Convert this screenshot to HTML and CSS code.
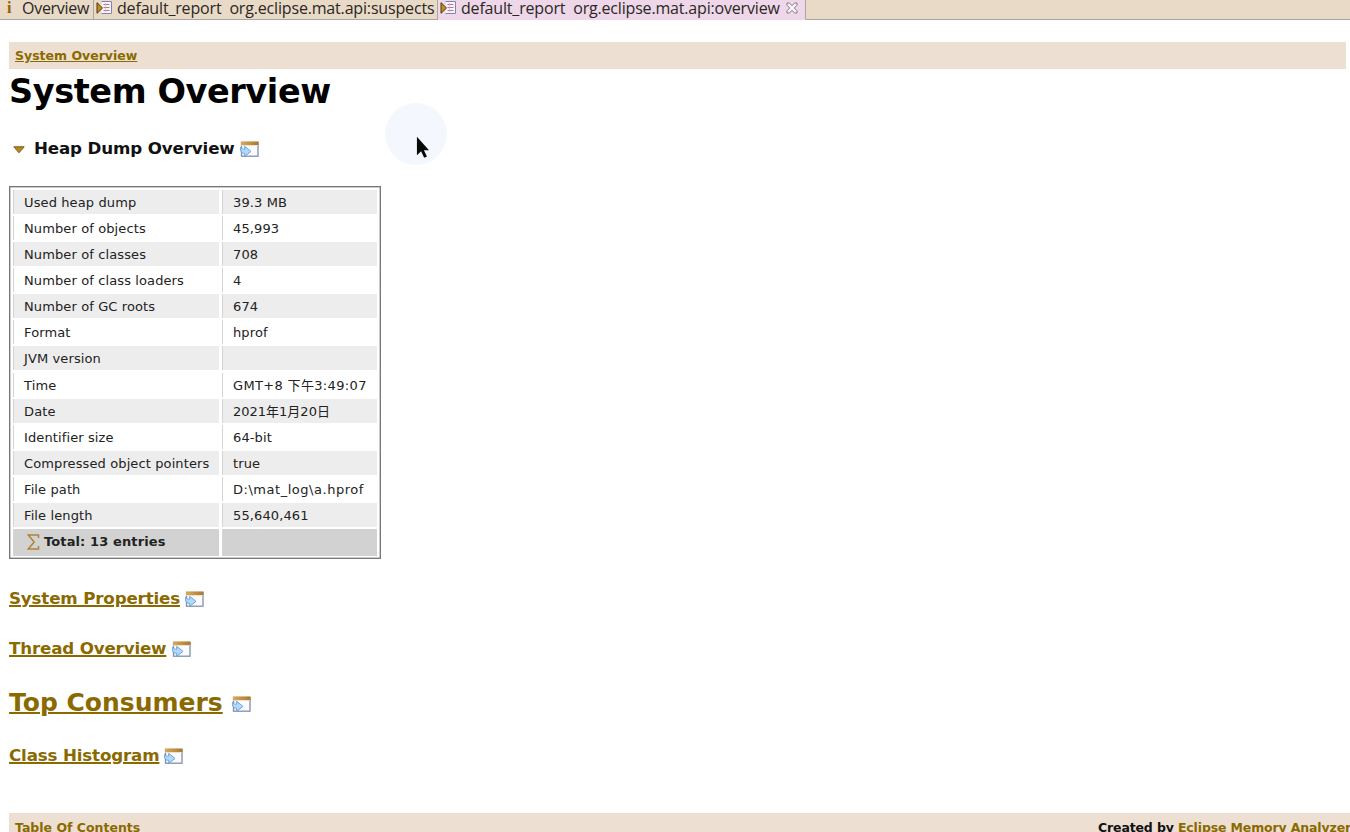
FILE: index.html
```html
<!DOCTYPE html>
<html lang="en">
<head>
<meta charset="utf-8">
<title>System Overview</title>
<link rel="stylesheet" href="styles.css">
</head>
<body>
<svg class="defs" width="0" height="0">
  <defs>
    <linearGradient id="gold" x1="0" x2="1" y1="0" y2="0"><stop offset="0" stop-color="#d9a95c"/><stop offset="1" stop-color="#a87a2b"/></linearGradient>
    <symbol id="open" viewBox="0 0 19 16">
      <rect x="1.5" y="1.5" width="16.5" height="13.7" fill="#fbfbff" stroke="#8190aa" stroke-width="1.3"/>
      <rect x="1" y=".5" width="17.500" height="3.700" fill="url(#gold)"/>
      <path d="M1 4.500h17" stroke="#f0dfbe" stroke-width=".7"/>
      <path d="M.7 6.200c.7 1.800 2 2.200 4 1.900V5.300l6.300 5.100-6.300 4.900v-2.900C2 12.600-.3 10.200.7 6.200z" fill="#b4d8fc" stroke="#6aa3dc" stroke-width="1"/>
    </symbol>
    <symbol id="report" viewBox="0 0 17 14">
      <path d="M5.500 .5H15.500V12.500H5.500" fill="#f8f3fb" stroke="#8384ad" stroke-width="1"/>
      <path d="M7.500 3.500h6M7.500 6.500h6M7.500 9.500h6" stroke="#b77791" stroke-width="1"/>
      <path d="M9.500 2v9" stroke="#d7b4c8" stroke-width=".7"/>
      <path d="M1 1.700 6.500 7 1 12.300z" fill="#c68d16" stroke="#4a3514" stroke-width="1"/>
    </symbol>
  </defs>
</svg>
<nav class="tabs">
  <div class="tab tab-info"><b class="info">i</b><span class="t-info">Overview</span></div>
  <div class="tab tab-sus"><svg class="report"><use href="#report"/></svg><span class="t-sus">default_report&nbsp; org.eclipse.mat.api:suspects</span></div>
  <div class="tab tab-active"><svg class="report"><use href="#report"/></svg><span class="t-act">default_report&nbsp; org.eclipse.mat.api:overview</span>
    <svg class="close" viewBox="0 0 12 12"><path d="M1 1h2.500L6 3.700 8.500 1H11v2.200L8.300 6 11 8.800V11H8.500L6 8.300 3.500 11H1V8.800L3.700 6 1 3.200z" fill="#faf0fa" stroke="#77727b" stroke-width=".9"/></svg></div>
  <div class="rest"></div>
</nav>
<main>
  <div class="crumbs"><a>System Overview</a></div>
  <h1>System Overview</h1>
  <h3 class="heap"><svg class="arrow" viewBox="0 0 12 8"><path d="M.8.800h10.400L6 6.800z" fill="#b8861c" stroke="#7e5a1b" stroke-width="1"/></svg><span>Heap Dump Overview</span><svg class="open"><use href="#open"/></svg></h3>
  <div class="table">
    <div class="row"><span>Used heap dump</span><span>39.3 MB</span></div>
    <div class="row"><span>Number of objects</span><span>45,993</span></div>
    <div class="row"><span>Number of classes</span><span>708</span></div>
    <div class="row"><span>Number of class loaders</span><span>4</span></div>
    <div class="row"><span>Number of GC roots</span><span>674</span></div>
    <div class="row"><span>Format</span><span>hprof</span></div>
    <div class="row"><span>JVM version</span><span></span></div>
    <div class="row"><span>Time</span><span class="time">GMT+8 下午3:49:07</span></div>
    <div class="row"><span>Date</span><span class="date">2021年1月20日</span></div>
    <div class="row"><span>Identifier size</span><span>64-bit</span></div>
    <div class="row"><span>Compressed object pointers</span><span>true</span></div>
    <div class="row"><span>File path</span><span class="path">D:\mat_log\a.hprof</span></div>
    <div class="row"><span>File length</span><span>55,640,461</span></div>
    <div class="row total"><span><svg class="sigma" viewBox="0 0 13 16"><path d="M11.500 4V1H1.200l6 7-6 7h10.300v-3" fill="none" stroke="#b18339" stroke-width="1.500"/></svg>Total: 13 entries</span><span></span></div>
  </div>
  <h3 class="props"><a>System Properties</a><svg class="open"><use href="#open"/></svg></h3>
  <h3 class="thread"><a>Thread Overview</a><svg class="open"><use href="#open"/></svg></h3>
  <h2 class="top"><a>Top Consumers</a><svg class="open"><use href="#open"/></svg></h2>
  <h3 class="histo"><a>Class Histogram</a><svg class="open"><use href="#open"/></svg></h3>
  <footer><a>Table Of Contents</a><span class="credit">Created by <a>Eclipse Memory Analyzer</a></span></footer>
</main>
<div class="pointer"><svg viewBox="0 0 14 24"><path d="M1 1v20l4.500-4.300 3.300 7 3-1.400-3.300-6.800H14z" fill="#080808"/></svg></div>
</body>
</html>
```
FILE: styles.css
```css
* { box-sizing: border-box; }
body { margin: 0; width: 1350px; height: 832px; overflow: hidden; position: relative; background: #fff; color: #111; font-family: "DejaVu Sans", "Noto Sans CJK SC", sans-serif; }
svg { display: block; flex: none; }
.defs { position: absolute; }
a { color: #8a6a00; text-decoration: underline; text-decoration-color: #8a6a00; }

.tabs { display: flex; height: 20px; font: 16px/17px "Open Sans", sans-serif; color: #2b2724; background: #e8dac6; }
.tab { display: flex; height: 20px; flex: none; border-right: 1px solid #aaa5a0; border-bottom: 1px solid #aaa5a0; }
.tab-info { width: 94px; padding-left: 7px; }
.tab span { white-space: pre; }
.info { width: 15px; font: bold 16px/16px "Liberation Serif", serif; color: #91600a; }
.tab-sus { width: 344px; padding-left: 2px; }
.tab-active { width: 368px; padding-left: 2px; background: #eed7e9; border-bottom-color: #eed7e9; }
.report { width: 17px; height: 14px; margin: 1px 4px 0 0; }
.t-info { letter-spacing: -.28px; }
.t-sus { letter-spacing: -.17px; }
.t-act { width: 320px; margin-right: 5px; letter-spacing: -.18px; }
.close { width: 12px; height: 12px; margin-top: 2px; }
.rest { flex: 1; border-bottom: 1px solid #aaa5a0; }

main { padding: 22px 4px 0 9px; }
.crumbs { height: 27px; padding-left: 6px; background: #eddfd2; font-weight: bold; font-size: 12.500px; line-height: 28px; }
h1, h2, h3 { margin: 0; white-space: nowrap; display: flex; align-items: center; }
h1 { height: 45px; font-size: 33.500px; letter-spacing: -.4px; color: #000; }
h3 { height: 24px; font-size: 16.700px; letter-spacing: -.16px; }
h3 a { text-decoration-thickness: 1.500px; }
h2 a { text-decoration-thickness: 2px; }
.heap { margin-top: 22px; padding-left: 4px; letter-spacing: -.14px; }
.arrow { width: 12px; height: 8px; margin: 4px 9px 0 0; }
.open { width: 19px; height: 16px; margin: 1px 0 0 5px; }
.table { width: 372px; height: 373px; margin-top: 26px; border: 1px solid #777; box-shadow: inset 0 0 0 .5px #999; padding: 3px; display: grid; grid-template-rows: repeat(13, 24px) 27px; row-gap: 2.080px; font-size: 13px; line-height: 25.500px; letter-spacing: .115px; color: #222; }
.row { display: grid; grid-template-columns: 206px 155px; column-gap: 3px; }
.row > span { height: 24px; padding-left: 10px; border-left: 1px solid #d4d4d4; white-space: nowrap; }
.row:nth-child(odd) > span { background: #ededed; }
.row.total > span { display: flex; height: 27px; background: #d2d2d2; font-weight: bold; line-height: 25px; }
.time { letter-spacing: .34px; }
.date { letter-spacing: 0; }
.path { letter-spacing: .53px; }
.sigma { width: 13px; height: 16px; margin: 5px 4px 0 3px; }
.props { margin-top: 27px; }
.thread { margin-top: 26px; }
.thread .open { margin-left: 6px; }
.top { margin-top: 25px; height: 34px; font-size: 25px; }
.top .open { margin: 3px 0 0 9px; }
.histo { margin-top: 24px; }
footer { margin-top: 46px; margin-right: -5px; height: 30px; padding-left: 6px; background: #eddfd2; font-size: 12.500px; font-weight: bold; line-height: 30px; display: flex; justify-content: space-between; white-space: nowrap; }
.credit { letter-spacing: -.14px; }

.pointer { position: absolute; left: 385px; top: 103px; width: 62px; height: 62px; border-radius: 50%; background: #f4f7fe; padding: 32px 0 0 31px; }
.pointer svg { width: 13px; height: 24px; }
```
